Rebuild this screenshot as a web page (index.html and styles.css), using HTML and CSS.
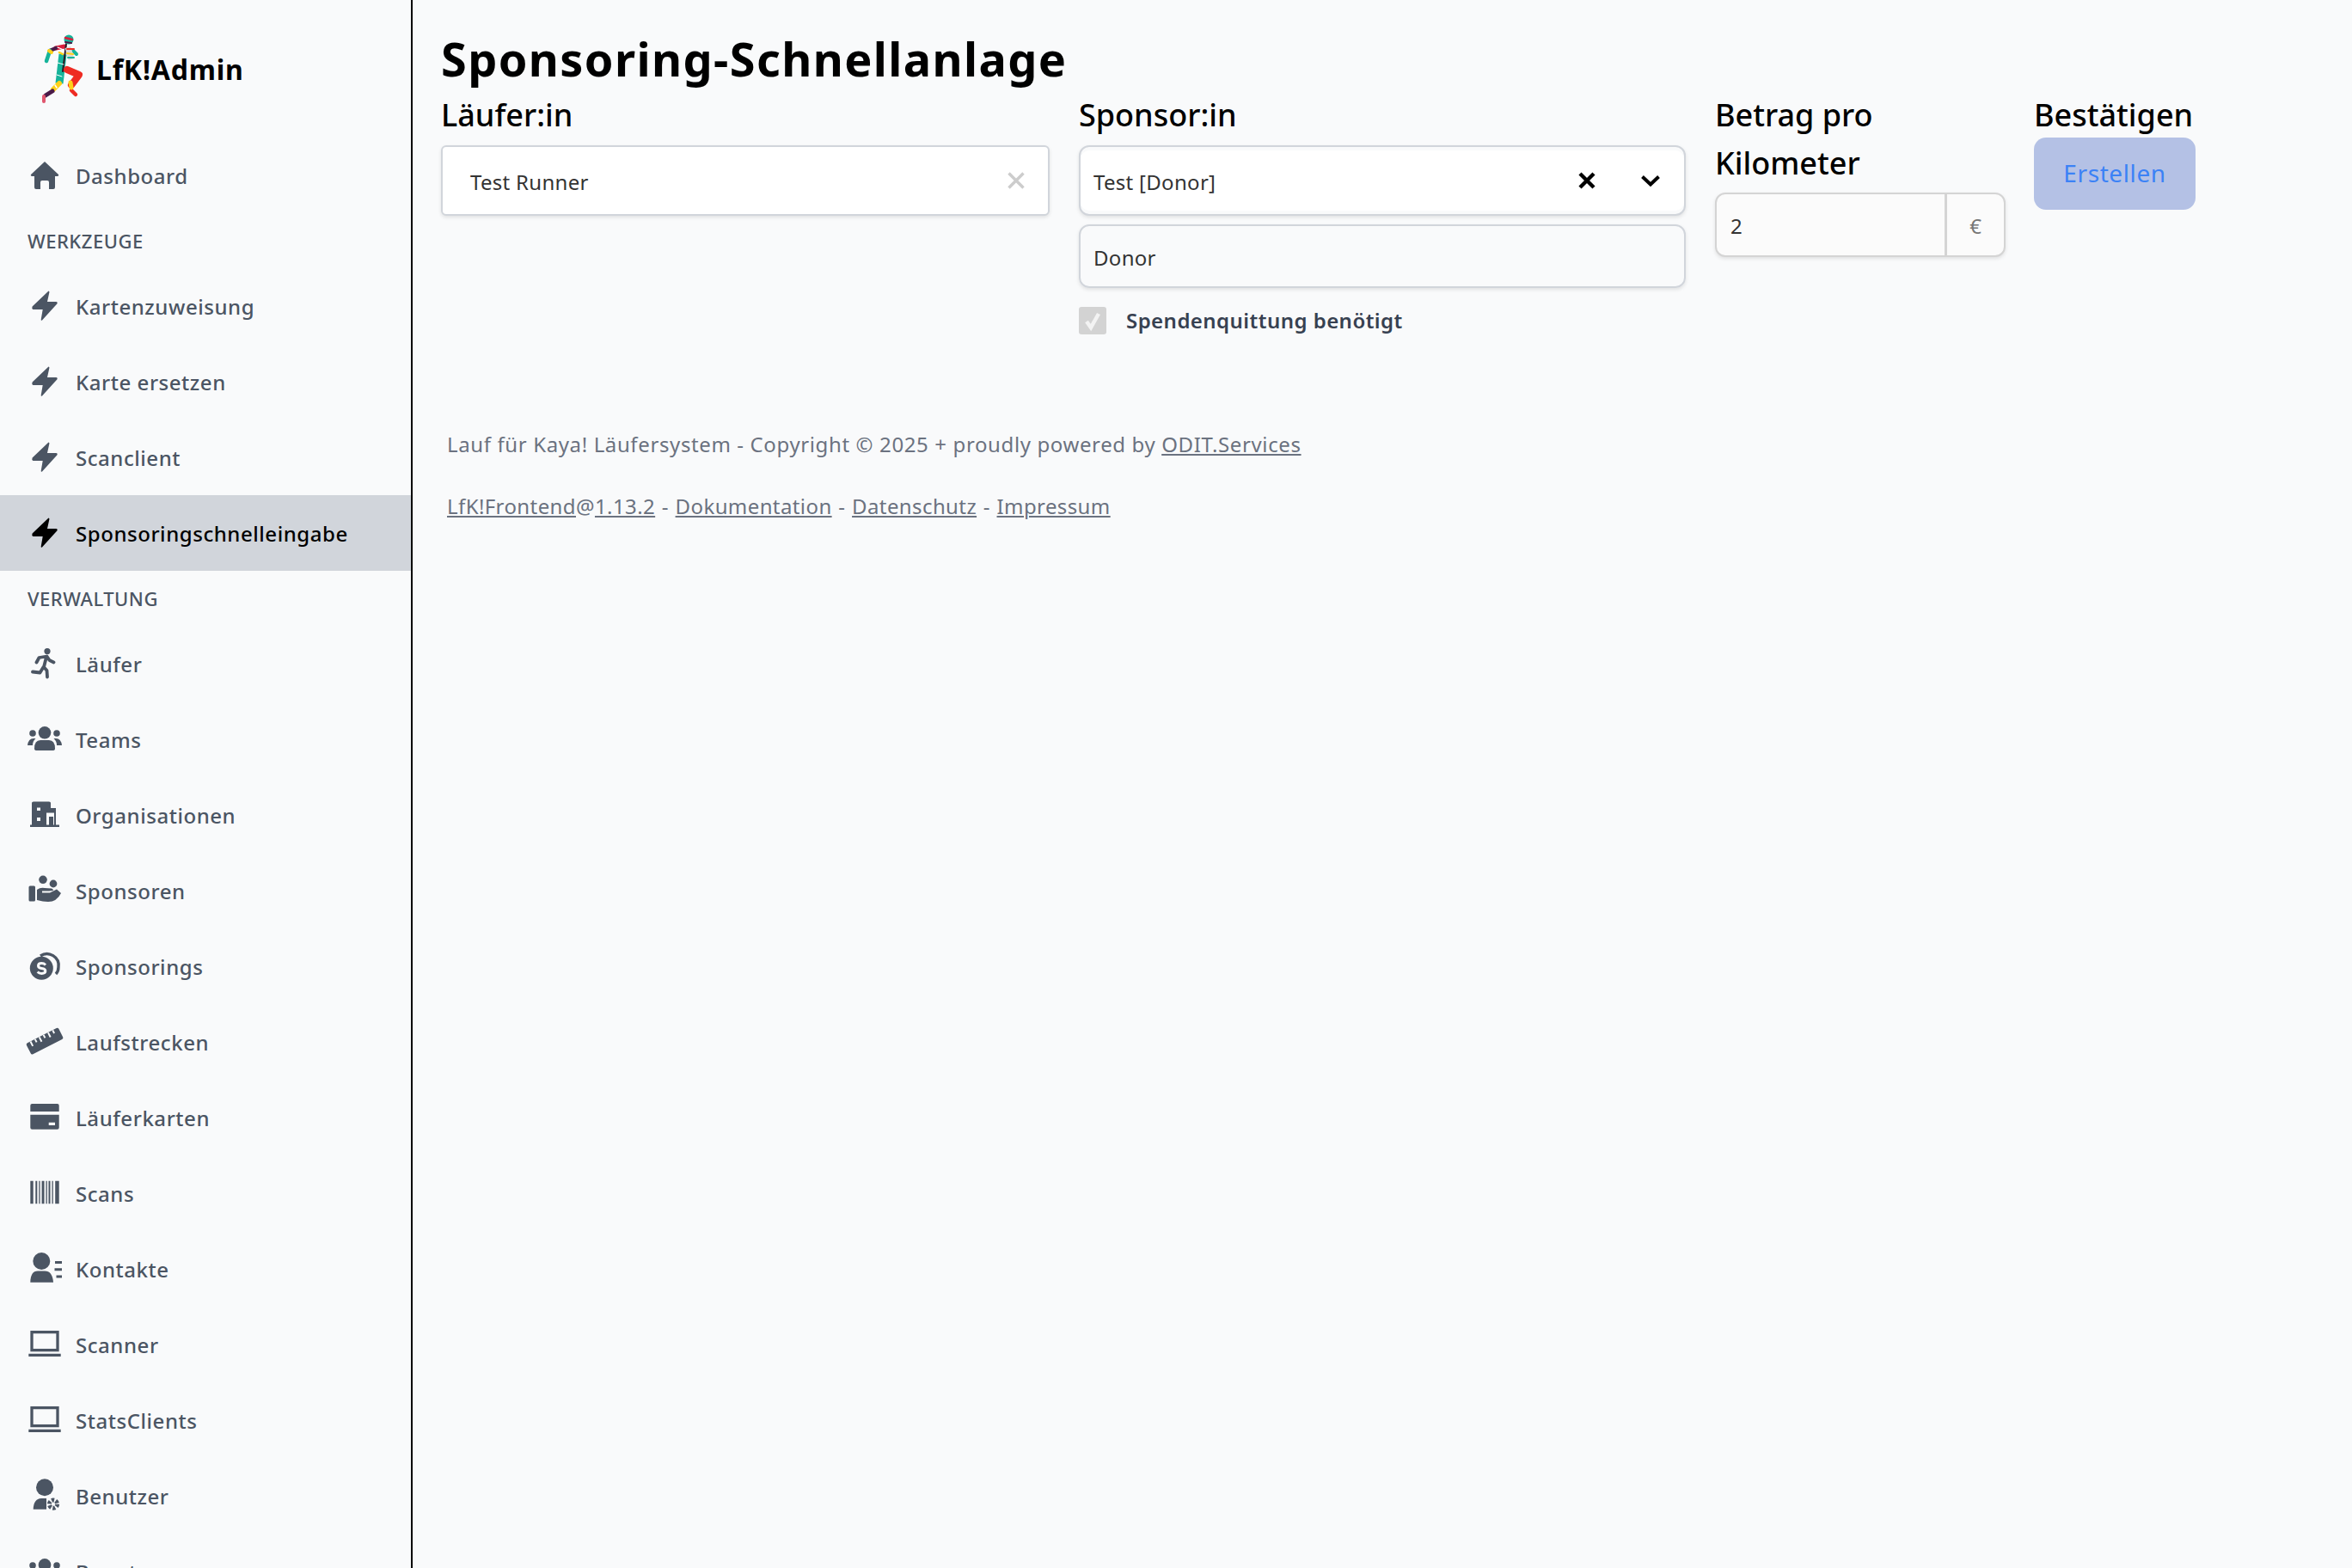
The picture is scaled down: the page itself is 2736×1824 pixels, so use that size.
FILE: index.html
```html
<!DOCTYPE html>
<html lang="de">
<head>
<meta charset="utf-8">
<title>LfK!Admin</title>
<link rel="stylesheet" href="styles.css">
</head>
<body>
<div class="app">
<aside class="sidebar">
  <div class="brand">
    <svg class="logo" viewBox="0 0 56 86" fill="none" stroke-linecap="round" stroke-linejoin="round">
      <path d="M30 17 L20 19" stroke="#d81e3c" stroke-width="5"/>
      <path d="M20 19 L13 22" stroke="#4a1a48" stroke-width="4.5"/>
      <path d="M13 22 L9 34" stroke="#16b39a" stroke-width="4.5"/>
      <path d="M12 22 L15 24" stroke="#ffd11a" stroke-width="4"/>
      <path d="M28 26 L24 60" stroke="#16b39a" stroke-width="9" stroke-linecap="butt"/>
      <path d="M39 21 L44 26" stroke="#16b39a" stroke-width="4"/>
      <path d="M32 14 L28 46" stroke="#2b1520" stroke-width="2"/>
      <path d="M34 18 L38 32" stroke="#d9d9d9" stroke-width="7" stroke-linecap="butt"/>
      <path d="M33 20 L41 20" stroke="#ee2b23" stroke-width="2"/>
      <path d="M33 25 L40 26" stroke="#ffd11a" stroke-width="2"/>
      <path d="M34 30 L41 30" stroke="#16b39a" stroke-width="2"/>
      <path d="M33 44 L47 50 L38 62" stroke="#ee2b23" stroke-width="8"/>
      <path d="M38 68 L43 73" stroke="#ee2b23" stroke-width="4.5"/>
      <path d="M37 59 L38 65" stroke="#ffd11a" stroke-width="5"/>
      <path d="M24 60 L17 67" stroke="#ffd11a" stroke-width="6"/>
      <path d="M19 62 L21 65" stroke="#fff" stroke-width="1.5"/>
      <path d="M16 69 L8 74" stroke="#4a1a48" stroke-width="5"/>
      <path d="M6 75 L6 81" stroke="#e0566e" stroke-width="4"/>
      <circle cx="35" cy="9" r="5.5" fill="#16b39a"/>
      <path d="M31 7 L39 9" stroke="#d81e3c" stroke-width="2.5"/>
      <path d="M31 12 L38 13" stroke="#4a1a48" stroke-width="2"/>
      <path d="M22 18 L29 21" stroke="#fff" stroke-width="1.2"/>
      <path d="M24 24 L28 26" stroke="#ffd11a" stroke-width="2.5"/>
      <path d="M22 36 L29 38" stroke="#fff" stroke-width="1"/>
      <path d="M21 50 L27 52" stroke="#fff" stroke-width="1"/>
    </svg>
    <span class="brand-name">LfK!Admin</span>
  </div>
  <nav>
    <a class="item"><svg class="ico" viewBox="0 0 40 36"><path d="M20 2 L36 17 Q37 18.5 35 19 H32 V32 Q32 34 30 34 H25 V26 Q25 24 23 24 H17 Q15 24 15 26 V34 H10 Q8 34 8 32 V19 H5 Q3 18.5 4 17 Z"/></svg><span>Dashboard</span></a>
    <div class="group">WERKZEUGE</div>
    <a class="item"><svg class="ico" viewBox="0 0 40 36"><path d="M24.5 .5 Q25.6 .5 25.4 2 L23 13 H33.5 Q35.5 13.5 34.5 15.2 L17 34.6 Q15.6 35.4 15.7 33.8 L17.7 22 H6.5 Q4.6 21 5.6 18.6 Z"/></svg><span>Kartenzuweisung</span></a>
    <a class="item"><svg class="ico" viewBox="0 0 40 36"><path d="M24.5 .5 Q25.6 .5 25.4 2 L23 13 H33.5 Q35.5 13.5 34.5 15.2 L17 34.6 Q15.6 35.4 15.7 33.8 L17.7 22 H6.5 Q4.6 21 5.6 18.6 Z"/></svg><span>Karte ersetzen</span></a>
    <a class="item"><svg class="ico" viewBox="0 0 40 36"><path d="M24.5 .5 Q25.6 .5 25.4 2 L23 13 H33.5 Q35.5 13.5 34.5 15.2 L17 34.6 Q15.6 35.4 15.7 33.8 L17.7 22 H6.5 Q4.6 21 5.6 18.6 Z"/></svg><span>Scanclient</span></a>
    <a class="item active"><svg class="ico" viewBox="0 0 40 36"><path d="M24.5 .5 Q25.6 .5 25.4 2 L23 13 H33.5 Q35.5 13.5 34.5 15.2 L17 34.6 Q15.6 35.4 15.7 33.8 L17.7 22 H6.5 Q4.6 21 5.6 18.6 Z"/></svg><span>Sponsoringschnelleingabe</span></a>
    <div class="group">VERWALTUNG</div>
    <a class="item"><svg class="ico" viewBox="0 0 40 36"><circle cx="23" cy="3.6" r="3.6"/><path class="line" d="M10.5 16.5 L13.5 11 L22.5 9.5 L25.5 14 L30.5 16.5 M22 10 L19 22 L22.5 26 L23 33.5 M18.5 22 L14.5 28.5 L6 27.5"/></svg><span>Läufer</span></a>
    <a class="item"><svg class="ico" viewBox="0 0 40 36"><circle cx="20" cy="10.3" r="7.3"/><circle cx="6" cy="11" r="3.8"/><circle cx="34" cy="11" r="3.8"/><path d="M8 29 Q8 19 15 19 H25 Q32 19 32 29 Q32 31 29 31 H11 Q8 31 8 29 Z"/><path d="M0 25 Q1 17 7 17 L9.5 17 Q6 20 6 25 Z"/><path d="M40 25 Q39 17 33 17 L30.5 17 Q34 20 34 25 Z"/></svg><span>Teams</span></a>
    <a class="item"><svg class="ico" viewBox="0 0 40 36"><path fill-rule="evenodd" d="M5 4 Q5 2.5 7 2.5 H25 Q27 2.5 27 4 V10 H33 V29.5 H37 V32 H3 V29.5 H5 Z M11 9.5 V13 H15 V9.5 Z M11 21 V25 H15 V21 Z M22 17 V29.5 H25 V20 H30 V29.5 H31 V15.5 H22 Z"/></svg><span>Organisationen</span></a>
    <a class="item"><svg class="ico" viewBox="0 0 40 36"><circle cx="18" cy="5.3" r="4.8"/><circle cx="30" cy="10" r="4.4"/><rect x="1.5" y="12.5" width="7.5" height="18" rx="1.5"/><path d="M11 17 Q15 14 20 15 L28 15.5 Q30 16 30 18 L25 18.5 H17 V20.5 H26 L34 16.5 L39 21 Q34 31 24 31 Q18 31 11 29 Z"/></svg><span>Sponsoren</span></a>
    <a class="item"><svg class="ico" viewBox="0 0 40 36"><path class="ring" d="M15 6 A13.5 13.5 0 0 1 36 19 Q36 24 33 27"/><circle cx="16.3" cy="20.3" r="13.5"/><path class="cut" d="M21 16.5 Q19 14.6 16.5 14.6 Q12.5 14.6 12.5 17.5 Q12.5 20 16.5 20.5 Q20.8 21 20.8 23.5 Q20.8 26.4 16.5 26.4 Q13.5 26.4 11.7 24.4"/></svg><span>Sponsorings</span></a>
    <a class="item"><svg class="ico" viewBox="0 0 40 36"><g transform="rotate(-27 20 17)"><rect x="-1" y="9.8" width="42" height="14.5" rx="2"/><path class="tick" d="M5 10 V16 M11 10 V14 M16.5 10 V16 M22 10 V14 M28 10 V16 M34 10 V14"/></g></svg><span>Laufstrecken</span></a>
    <a class="item"><svg class="ico" viewBox="0 0 40 36"><path d="M3.3 4 Q3.3 2 5.3 2 H34.7 Q36.7 2 36.7 4 V11 H3.3 Z"/><path fill-rule="evenodd" d="M3.3 14.7 H36.7 V29.7 Q36.7 31.7 34.7 31.7 H5.3 Q3.3 31.7 3.3 29.7 Z M24.7 23.7 V27 H32 V23.7 Z"/></svg><span>Läuferkarten</span></a>
    <a class="item"><svg class="ico" viewBox="0 0 40 36"><path d="M3.3 3.7 H6.7 V30.3 H3.3 Z M9.3 3.7 H11.3 V30.3 H9.3 Z M13.3 3.7 H14.6 V30.3 H13.3 Z M16.6 3.7 H19.5 V30.3 H16.6 Z M21.5 3.7 H22.8 V30.3 H21.5 Z M24.5 3.7 H26.5 V30.3 H24.5 Z M28.5 3.7 H29.8 V30.3 H28.5 Z M32.2 3.7 H36.7 V30.3 H32.2 Z"/></svg><span>Scans</span></a>
    <a class="item"><svg class="ico" viewBox="0 0 40 36"><circle cx="16.3" cy="9" r="10"/><path d="M3.3 33.7 Q3.5 20.5 12 20.5 H20 Q29 20.5 30 33.7 Z"/><path d="M32 9 H40 V12 H32 Z M31.5 17.2 H40 V20.2 H31.5 Z M33.5 25.5 H40 V28.5 H33.5 Z"/></svg><span>Kontakte</span></a>
    <a class="item"><svg class="ico" viewBox="0 0 40 36"><rect class="frame" x="5" y="3.6" width="30" height="21"/><path d="M1.3 28.7 H38.7 V32 H1.3 Z"/></svg><span>Scanner</span></a>
    <a class="item"><svg class="ico" viewBox="0 0 40 36"><rect class="frame" x="5" y="3.6" width="30" height="21"/><path d="M1.3 28.7 H38.7 V32 H1.3 Z"/></svg><span>StatsClients</span></a>
    <a class="item"><svg class="ico" viewBox="0 0 40 36"><circle cx="20" cy="8.3" r="10"/><path d="M6.7 33.7 Q7 21.5 16 21 L22 21 V33.7 Z"/><circle class="gear" cx="30" cy="27.7" r="4.6"/></svg><span>Benutzer</span></a>
    <a class="item"><svg class="ico" viewBox="0 0 40 36"><circle cx="20" cy="10.3" r="7.3"/><circle cx="6" cy="11" r="3.8"/><circle cx="34" cy="11" r="3.8"/><path d="M8 29 Q8 19 15 19 H25 Q32 19 32 29 Q32 31 29 31 H11 Q8 31 8 29 Z"/></svg><span>Benutzergruppen</span></a>
  </nav>
</aside>
<main class="main">
  <h1 class="title">Sponsoring-Schnellanlage</h1>
  <div class="form">
    <section>
      <div class="label">Läufer:in</div>
      <div class="runner-box"><span class="val">Test Runner</span>
        <svg class="clear" viewBox="0 0 20 20"><path d="M1.5 1.5 L18.5 18.5 M18.5 1.5 L1.5 18.5"/></svg>
      </div>
    </section>
    <section>
      <div class="label">Sponsor:in</div>
      <div class="select-box"><div class="select-inner"><span class="val">Test [Donor]</span>
        <svg class="sel-x" viewBox="0 0 20 20"><path d="M2 2 L18 18 M18 2 L2 18"/></svg>
        <svg class="sel-chev" viewBox="0 0 24 14"><path d="M2.5 2.5 L12 11.5 L21.5 2.5"/></svg>
      </div></div>
      <div class="donor-box"><span class="val">Donor</span></div>
      <div class="check-row">
        <span class="check"><svg viewBox="0 0 32 32"><path d="M9 17 L14 24 L23 8"/></svg></span>
        <span class="check-label">Spendenquittung benötigt</span>
      </div>
    </section>
    <section>
      <div class="label">Betrag pro Kilometer</div>
      <div class="amount"><span class="amount-val">2</span><span class="amount-unit">€</span></div>
    </section>
    <section class="confirm">
      <div class="label label-btn">Bestätigen</div>
      <button class="submit">Erstellen</button>
    </section>
  </div>
  <footer class="foot">
    <p>Lauf für Kaya! Läufersystem - Copyright © 2025 + proudly powered by <a>ODIT.Services</a></p>
    <p class="links"><a>LfK!Frontend</a>@<a>1.13.2</a> - <a>Dokumentation</a> - <a>Datenschutz</a> - <a>Impressum</a></p>
  </footer>
</main>
</div>
</body>
</html>
```
FILE: styles.css
```css
* { box-sizing: border-box; }
html, body { margin: 0; height: 100%; }
body { background: #f9fafb; font-family: "Noto Sans", sans-serif; color: #000; overflow: hidden; }
.app { display: flex; height: 1824px; overflow: hidden; }
.sidebar { width: 480px; flex: none; height: 1824px; overflow: hidden; border-right: 2px solid #000; }
.brand { height: 160px; display: flex; align-items: center; padding-left: 45px; gap: 11px; }
.logo { width: 56px; height: 86px; flex: none; }
.brand-name { font-size: 32px; font-weight: 700; letter-spacing: .8px; color: #000; }
.item { height: 88px; display: flex; align-items: center; padding-left: 32px; gap: 16px; font-size: 24px; font-weight: 500; letter-spacing: .55px; color: #4b5563; }
.item.active { background: #d1d5db; color: #000; }
.ico { width: 40px; height: 36px; flex: none; fill: currentColor; overflow: visible; }
.ico .line { fill: none; stroke: currentColor; stroke-width: 3.8; stroke-linecap: round; stroke-linejoin: round; }
.ico .ring { fill: none; stroke: currentColor; stroke-width: 3.4; }
.ico .cut { fill: none; stroke: #f9fafb; stroke-width: 3; }
.ico .tick { fill: none; stroke: #f9fafb; stroke-width: 2; }
.ico .frame { fill: none; stroke: currentColor; stroke-width: 3.3; }
.ico .gear { fill: none; stroke: currentColor; stroke-width: 5; stroke-dasharray: 3 1.8; }
.group { height: 64px; display: flex; align-items: center; padding-left: 32px; font-size: 22px; font-weight: 500; letter-spacing: .5px; color: #4b5563; }
.main { flex: 1; padding-left: 33px; min-width: 0; }
.title { margin: 0; padding-top: 30px; height: 106px; font-size: 54px; line-height: 76px; font-weight: 700; letter-spacing: 1.4px; color: #000; }
.form { display: grid; grid-template-columns: 708px 706px 338px 188px; column-gap: 34px; align-items: start; }
.confirm { margin-left: -1px; }
.label { font-size: 36px; line-height: 56px; font-weight: 500; color: #000; }
.val { padding-top: 2px; letter-spacing: .3px; }
.runner-box { margin-top: 7px; height: 82px; background: #fff; border: 2px solid #d1d5db; border-radius: 6px; box-shadow: 0 2px 4px rgba(0,0,0,.1); display: flex; align-items: center; justify-content: space-between; padding: 0 27px 0 32px; font-size: 24px; color: #333; }
.clear { width: 20px; height: 20px; fill: none; stroke: #ccc; stroke-width: 3.4; }
.select-box { margin-top: 7px; height: 82px; background: #f9fafb; border: 2px solid #d1d5db; border-radius: 12px; box-shadow: 0 2px 4px rgba(0,0,0,.1); padding: 4px 0; display: flex; }
.select-inner { flex: 1; background: #fff; display: flex; align-items: center; padding: 0 27px 0 15px; font-size: 24px; color: #333; border-radius: 10px; }
.select-inner .val { flex: 1; }
.sel-x { width: 20px; height: 20px; fill: none; stroke: #000; stroke-width: 4.4; margin-right: 52px; }
.sel-chev { width: 24px; height: 14px; fill: none; stroke: #000; stroke-width: 4; }
.donor-box { margin-top: 10px; height: 74px; border: 2px solid #d1d5db; border-radius: 12px; box-shadow: 0 2px 4px rgba(0,0,0,.1); display: flex; align-items: center; padding-left: 15px; font-size: 24px; color: #333; }
.check-row { margin-top: 21px; display: flex; align-items: center; gap: 23px; }
.check { width: 32px; height: 32px; background: #d3d3d3; border-radius: 3px; flex: none; }
.check svg { display: block; fill: none; stroke: #f3f3f3; stroke-width: 4.5; }
.check-label { font-size: 24px; font-weight: 600; letter-spacing: .45px; color: #374151; }
.amount { margin-top: 6px; height: 75px; display: flex; border: 2px solid #d4d4d4; border-radius: 12px; background: #fbfbfb; box-shadow: 0 2px 4px rgba(0,0,0,.1); font-size: 24px; }
.amount-val { flex: 1; display: flex; align-items: center; padding: 2px 0 0 16px; color: #333; }
.amount-unit { width: 69px; border-left: 3px solid #d4d4d4; display: flex; align-items: center; justify-content: center; padding-top: 2px; color: #777; }
.label-btn { white-space: nowrap; }
.submit { margin-top: -2px; width: 188px; height: 84px; border: 0; border-radius: 14px; background: #b4c1e5; color: #3b82f6; font: 400 28px "Noto Sans", sans-serif; letter-spacing: .6px; display: block; padding: 0 0 2px; }
.foot { margin-top: 112px; padding-left: 7px; font-size: 24px; letter-spacing: .62px; color: #6b7280; }
.foot p { margin: 0 0 40px; line-height: 32px; }
.foot .links { letter-spacing: .4px; word-spacing: 1px; }
.foot a { text-decoration: underline; }
```
